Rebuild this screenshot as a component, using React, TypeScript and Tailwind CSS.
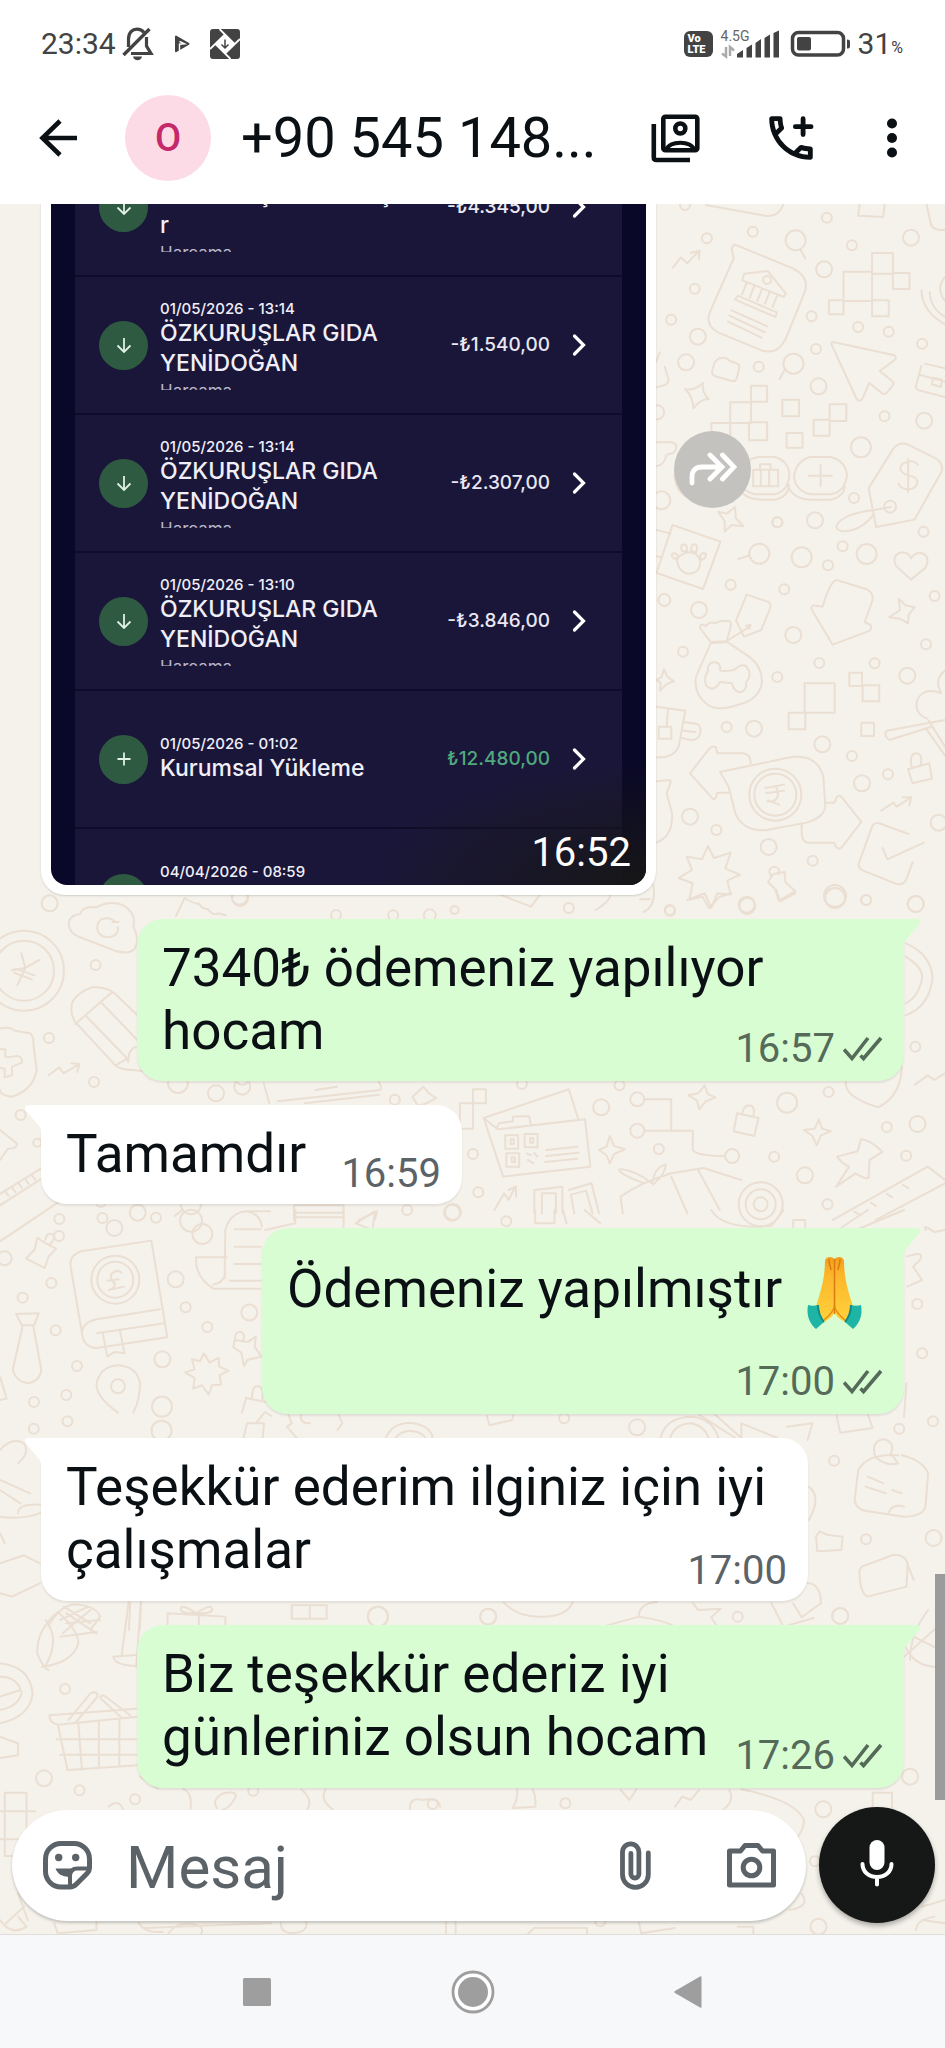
import { useState } from "react";

interface Transaction {
  date?: string;
  name: string[];
  amount: string;
  income?: boolean;
  note?: boolean;
}

interface Message {
  id: number;
  text: string;
  time: string;
  mine?: boolean;
  emoji?: boolean;
  size: string;
}

interface Doodle {
  x: number;
  y: number;
  sx: number;
  sy: number;
  paths: string[];
  dots: number[][];
}

const transactions: Transaction[] = [
  { date: "01/05/2026 - 13:15", name: ["ÖZKURUŞLAR GIDAŞ", "r"], amount: "-₺4.345,00", note: true },
  { date: "01/05/2026 - 13:14", name: ["ÖZKURUŞLAR GIDA", "YENİDOĞAN"], amount: "-₺1.540,00", note: true },
  { date: "01/05/2026 - 13:14", name: ["ÖZKURUŞLAR GIDA", "YENİDOĞAN"], amount: "-₺2.307,00", note: true },
  { date: "01/05/2026 - 13:10", name: ["ÖZKURUŞLAR GIDA", "YENİDOĞAN"], amount: "-₺3.846,00", note: true },
  { date: "01/05/2026 - 01:02", name: ["Kurumsal Yükleme"], amount: "₺12.480,00", income: true },
];

const messages: Message[] = [
  { id: 1, text: "7340₺ ödemeniz yapılıyor hocam", time: "16:57", mine: true, size: "w-[767px] pb-[18px]" },
  { id: 2, text: "Tamamdır", time: "16:59", size: "w-[421px] pb-[18px]" },
  { id: 3, text: "Ödemeniz yapılmıştır", time: "17:00", mine: true, emoji: true, size: "w-[642px] pb-[84px]" },
  { id: 4, text: "Teşekkür ederim ilginiz için iyi çalışmalar", time: "17:00", size: "w-[767px] pb-[19px]" },
  { id: 5, text: "Biz teşekkür ederiz iyi günleriniz olsun hocam", time: "17:26", mine: true, size: "w-[767px] pb-[19px]" },
];

// Wallpaper drawings, grouped by area. Dots are [x, y, radius].
const doodles: Doodle[] = [
  {
    x: 400, y: 195, sx: 0.3476, sy: 0.3333,
    paths: [
      "M880 30L1050 62Q1090 68 1102 30M1322 30L1318 62L1390 66L1394 30M1515 30L1528 90Q1535 108 1568 104",
      "M785 218L808 187L826 205L860 168M836 173L862 167L860 192",
      "M962 148L1130 220Q1180 246 1164 292L1110 430Q1086 482 1040 466L915 412Q876 390 892 350L960 190L954 160Z",
      "M990 236L1058 228L1110 296L1104 306L985 256ZM998 262L984 298M1020 270L1006 308M1042 280L1028 318M1064 290L1050 326M1086 300L1072 336M972 302L1084 352L1080 366L964 314Z",
      "M954 346L1056 394M948 362L1050 412M944 380L1040 428",
      "M1152 164L1166 190M1108 522L1092 552",
      "M1276 230H1358V318H1276ZM1358 174H1418V236H1358ZM1418 234H1466V282H1418ZM1234 316H1276V358H1234ZM1358 316H1406V364H1358ZM1358 236H1418",
      "M1500 286Q1502 350 1568 388M1524 292Q1526 340 1568 366M1568 246Q1540 280 1568 318",
      "M1242 440L1420 480Q1432 486 1422 496L1380 528L1418 560Q1422 566 1416 574L1400 594Q1392 600 1386 594L1350 564L1330 612Q1322 622 1314 612L1242 450Z",
      "M905 502L918 490Q940 484 948 498L966 504Q978 508 976 518L968 552Q964 560 954 558L908 544Q896 540 898 528Z",
      "M1510 506L1568 520M1500 512L1484 574Q1484 586 1500 588L1568 606M1496 540L1568 560M1534 548L1560 554L1556 576L1530 568Z",
      "M735 504L748 472M762 516L772 552Q774 564 762 570L735 578",
      "M820 582Q842 590 872 564Q866 590 888 612Q864 612 844 640Q844 606 820 582Z",
      "M950 622H1010V684H950ZM1010 572H1056V620H1010ZM1004 682H1056V736H1004ZM896 684H950V736H896Z",
      "M1100 614H1148V664H1100ZM1236 628H1284V678H1236ZM1190 674H1236V722H1190ZM1112 714H1158V758H1112Z",
      "M1030 786H1080Q1120 800 1120 842Q1116 890 1076 898H1020Q974 884 974 842Q980 798 1030 786ZM974 880Q990 912 1040 914H1080Q1116 906 1120 870M1180 786H1240Q1284 800 1286 842Q1280 890 1240 898H1180Q1134 884 1134 842Q1140 798 1180 786ZM1116 872Q1130 912 1180 914H1240Q1276 906 1280 876M840 786Q796 800 790 842Q794 904 850 914H910Q950 908 960 880",
      "M1016 824H1088V874H1016ZM1038 824V874M1062 824V874M1036 822V808H1066V822M1176 842H1242M1210 810V872",
      "M735 742H780Q800 746 794 762Q790 776 770 778M735 814Q760 812 766 782",
      "M1420 760L1348 880L1370 996L1480 974L1558 830Q1564 808 1544 792L1460 748Q1436 740 1420 760ZM1412 936L1360 946Q1290 954 1262 982Q1246 1002 1270 1008Q1320 1014 1362 960",
      "M1490 810Q1480 796 1462 800Q1436 806 1440 824Q1446 838 1466 842Q1492 848 1488 866Q1480 886 1456 882Q1440 880 1434 866M1462 792V892",
      "M915 950L940 956L964 936L966 970L988 994L954 990L934 1010L934 978ZM735 1004L778 1016M735 1084L750 1086",
      "M784 990L922 1040L872 1182L738 1134Z",
      "M1002 1082L974 1092",
      "M800 1108Q790 1090 812 1078Q832 1066 852 1078Q870 1096 860 1120Q850 1138 826 1136Q804 1130 800 1108ZM812 1068Q804 1052 816 1048Q828 1050 826 1068ZM838 1068Q836 1046 850 1048Q858 1056 852 1072ZM796 1092Q782 1092 782 1078Q790 1070 800 1082ZM864 1086Q866 1070 880 1076Q880 1092 866 1096Z",
      "M1470 1154L1426 1112Q1414 1078 1444 1072Q1464 1072 1470 1090Q1484 1068 1506 1076Q1526 1090 1512 1118Z",
    ],
    dots: [[820, 30, 5], [1228, 68, 5], [883, 130, 5], [1015, 110, 5], [1138, 136, 10], [1470, 128, 8], [1300, 151, 5], [1220, 223, 8], [848, 281, 5], [1056, 255, 4], [780, 374, 5], [857, 425, 8], [1184, 364, 5], [1318, 396, 5], [1406, 410, 5], [1502, 446, 5], [1197, 462, 5], [823, 502, 8], [1032, 515, 5], [1132, 506, 10], [1204, 574, 8], [1394, 664, 5], [1508, 677, 8], [740, 652, 7], [1326, 757, 10], [1306, 909, 5], [1410, 935, 6], [752, 916, 9], [1086, 982, 5], [1194, 976, 8], [1506, 1010, 5]],
  },
  {
    x: 640, y: 480, sx: 0.3333, sy: 0.3333,
    paths: [
      "M590 300Q570 304 548 380L520 376Q510 382 518 394L578 494L690 452Q698 440 690 434L674 426L698 360Q700 336 680 328Z",
      "M748 412L780 390L776 356L796 376L824 382L806 404L804 430L780 416Z",
      "M320 344L386 366Q394 372 390 386L364 450L312 470L288 422ZM265 480L330 440M318 438L332 434L328 446",
      "M212 486L180 444Q180 428 198 438Q208 422 226 430Q240 420 252 424Q276 416 272 440L260 484ZM212 490L168 590Q160 640 200 672Q230 696 290 676Q360 660 366 606Q366 560 330 532L262 486Z",
      "M240 570Q244 548 222 546Q200 550 204 574Q190 590 198 616Q220 640 240 606L276 610Q284 640 304 636Q322 628 318 608Q334 590 326 570Q314 546 292 562Q284 576 244 572Z",
      "M494 610H584V698H494ZM446 698H496V748H446ZM628 578H666V618H628ZM668 616H718V664H668ZM664 728H702V768H664Z",
      "M48 600L64 592L72 568L82 590L102 604L80 612L60 632L62 608ZM48 680L136 692L116 800Q100 836 48 832M56 740H94V776H56ZM84 686L80 740M132 726L172 732Q186 742 180 760Q176 782 150 780L126 774M130 752L166 756",
      "M915 720L740 752Q730 766 748 780L870 742M866 722L915 800M858 746L915 826M915 572Q880 600 904 640Q850 620 832 660Q820 700 862 716",
      "M232 820L228 802Q218 796 208 806L150 880L218 956Q228 962 232 938H266M236 820H310Q334 826 332 850",
      "M240 876L440 834Q530 816 550 890L556 980Q552 1012 500 1028L380 1050Q310 1056 286 1000L266 920ZM556 968H584Q590 940 604 950L664 1026L604 1104Q590 1112 582 1088H500Q480 1080 486 1030",
      "M376 924L432 914M378 940L432 932M382 964H400Q424 950 408 920M386 962L418 974",
      "M724 992L760 968L770 980L810 954M788 952L814 952L808 976M806 1062L718 1030Q700 1026 694 1046L656 1152Q654 1166 670 1172L770 1212Q790 1218 800 1196L818 1146M728 1104L742 1138L852 1088",
      "M804 868L868 850L876 896L818 910ZM816 864Q806 826 826 820Q850 820 842 854",
      "M204 1098L222 1134L272 1118L256 1166L300 1184L262 1202L272 1244L232 1240L214 1284L194 1240L148 1258L158 1210L116 1194L156 1170L140 1130L186 1138Z",
      "M400 1182L434 1176L436 1206L466 1234L416 1262L406 1228L384 1206ZM392 1186Q380 1164 404 1160Q422 1164 416 1182M48 904L90 900Q96 900 80 940L96 1000Q100 1070 48 1088M0 1258H30M40 1214Q50 1280 10 1296",
    ],
    dots: [[412, 127, 5], [358, 221, 10], [485, 232, 10], [680, 222, 10], [608, 199, 5], [564, 256, 5], [272, 314, 5], [433, 328, 5], [73, 360, 6], [177, 390, 8], [884, 348, 5], [460, 465, 8], [858, 493, 5], [129, 515, 5], [538, 549, 5], [704, 550, 5], [802, 587, 8], [412, 591, 5], [260, 741, 5], [342, 746, 8], [547, 793, 8], [636, 828, 5], [744, 883, 5], [666, 910, 8], [406, 944, 26], [406, 944, 21], [150, 1010, 8], [229, 1050, 5], [896, 1028, 8], [386, 1101, 8], [518, 1142, 5], [585, 1248, 11], [678, 1260, 5], [322, 1278, 8], [827, 1272, 8], [89, 1290, 5]],
  },
  {
    x: 0, y: 890, sx: 0.3333, sy: 0.3333,
    paths: [
      "M240 72Q250 46 290 52Q330 30 370 46Q410 70 400 110Q420 150 404 176Q390 194 350 184L246 144Q200 128 208 92Q214 76 240 72ZM346 96Q330 78 304 88Q284 104 296 130Q316 150 344 136Q356 126 354 112M338 96H356",
      "M528 78L554 24Q590 46 596 40Q610 60 622 56Q640 80 654 70L678 76",
      "M64 190L76 234L118 210M76 234L52 286M76 234L36 240M46 236L104 256M42 248L96 268",
      "M216 340Q226 310 276 292Q320 288 346 312L412 376M216 340Q210 370 224 394L346 526Q360 540 400 540L462 548M226 402L334 308M258 378L384 508M306 340L412 450M384 516L388 490Q404 460 418 480M346 526L386 504",
      "M0 416Q30 408 44 422L90 430Q102 440 100 460L110 540Q100 600 36 620Q0 616 0 600M0 478H16V500Q20 504 50 498Q68 500 66 518L36 530V556L14 562V536L0 534",
      "M146 556L178 532L190 550L236 524M214 520L238 522L232 546",
      "M0 720L50 760Q54 776 24 776L0 810M0 912L126 834M0 946L128 864M0 1054L224 904M16 904L26 918M36 892L46 906M56 880L66 894M76 868L86 882M96 856L106 870",
      "M112 1044L140 1062L168 1076L146 1100L134 1134L78 1106L104 1078ZM136 1050Q140 1024 160 1034Q166 1050 148 1064M544 962L524 978",
      "M244 1084L454 1052L502 1342L290 1374Q250 1372 246 1330L212 1130Q206 1096 244 1084ZM246 1330Q246 1298 290 1288L480 1258M290 1330L494 1300M308 1328L322 1400L344 1386L374 1390L360 1324",
      "M364 1148Q350 1136 334 1152Q328 1164 344 1180Q346 1196 326 1200L372 1190M322 1172L356 1168",
      "M680 1102H588Q584 1160 640 1196H780M674 1164L676 1020Q690 968 740 964H810M786 1010Q780 970 740 964M704 1018H782M704 1070H782M704 1122H782M690 1172H782M676 1150Q670 1180 640 1184",
      "M48 1272L116 1270L102 1306H66ZM68 1308L38 1440Q50 1476 84 1480Q120 1474 124 1440L100 1308",
      "M354 1568Q286 1520 290 1480Q300 1430 354 1426Q412 1430 420 1480Q420 1530 400 1568M0 1460L20 1526L0 1530",
      "M612 1390L628 1418L656 1404L658 1430L686 1442L658 1456L664 1484L636 1486L626 1514L606 1486L580 1496L584 1464L556 1448L584 1438L576 1408L600 1414Z",
      "M704 1350L744 1356L768 1340L764 1370L784 1400L742 1410L732 1428L724 1388L700 1372ZM706 1352Q702 1324 724 1326Q738 1336 728 1352M726 1568L738 1524L796 1536M756 1524Q756 1488 774 1488Q794 1494 786 1530",
    ],
    dots: [[149, 40, 8], [719, 20, 8], [287, 225, 5], [72, 242, 40], [72, 242, 30], [147, 444, 5], [282, 576, 5], [534, 579, 10], [648, 610, 8], [727, 560, 8], [62, 675, 5], [112, 758, 4], [302, 936, 5], [414, 918, 9], [178, 987, 5], [573, 943, 10], [468, 983, 5], [343, 1014, 8], [607, 1032, 10], [14, 1105, 7], [154, 1179, 5], [68, 1223, 5], [346, 1169, 24], [346, 1169, 18], [527, 1168, 8], [557, 1252, 5], [622, 1311, 5], [167, 1321, 5], [748, 1268, 8], [231, 1428, 5], [487, 1408, 8], [354, 1489, 7], [199, 1515, 5], [102, 1536, 5], [486, 1550, 10]],
  },
  {
    x: 100, y: 890, sx: 0.5389, sy: 0.3333,
    paths: [
      "M720 0L800 50L818 10M1090 30L1118 20L1130 54L1150 20L1172 10M1255 0L1262 34L1290 10M920 60Q960 20 940 0",
      "M304 580L314 640M330 634L520 600Q524 590 516 572M380 640L518 614M400 600L440 590",
      "M580 620L600 590L610 610L624 624L606 640L590 648Z",
      "M692 598H716V640H692ZM668 640H692V716H668Z",
      "M712 684L870 598L888 690M712 684L748 860L910 830L900 688L738 718ZM736 716L740 700L766 694V680L796 678L800 706",
      "M752 736H776V776H752ZM788 732H812V772H788ZM754 790H778V830H754ZM762 748H768V762H762ZM798 744H804V758H798ZM764 802H770V816H764ZM792 790L800 796M806 790L812 800M794 810L804 820M828 780L886 770M828 798L888 788M826 816L886 806",
      "M1010 628H1060V722M1010 722H1100V780Q1106 798 1160 798",
      "M1092 616L1110 610L1122 586L1128 612L1142 622L1124 634L1112 658L1108 632Z",
      "M1182 670L1222 684L1214 738L1176 724ZM1192 672Q1194 640 1210 648Q1216 660 1212 678",
      "M1306 720L1326 716L1334 688L1340 716L1356 724L1338 736L1330 766L1322 738ZM926 780L940 770L946 738L954 768L974 778L954 792L946 820L940 796Z",
      "M1412 748Q1410 760 1406 784L1368 800Q1376 820 1390 830L1366 890L1402 850Q1420 868 1426 864L1428 810L1452 786Q1430 750 1412 748Z",
      "M1384 575Q1380 620 1444 652Q1486 620 1488 530M1495 160Q1540 190 1545 260Q1540 350 1495 376M1495 200Q1525 230 1526 260Q1520 320 1495 340M1512 584L1536 556L1548 570L1568 550",
      "M806 970V900L858 890V970M820 970V910H846V970M870 900L912 880L926 970M880 970L874 914L902 902L914 970M732 960L750 910L758 930L770 892M758 900L772 890V920",
      "M970 970L966 920Q1000 880 1060 850L1120 834L1190 870M1060 860L1090 970M1110 840L1150 960M1010 880Q960 850 964 838Q990 838 1024 880Q1030 830 1050 824Q1050 850 1026 884",
      "M1360 990L1536 830L1568 870M1440 990L1568 880M1400 965L1410 975M1430 938L1440 948M1460 912L1470 922M1490 885L1500 895",
      "M360 990V946H452V990M360 968H452M480 990L514 964L510 990",
    ],
    dots: [[260, 24, 8], [438, 75, 5], [544, 76, 5], [612, 76, 6], [658, 60, 4], [870, 54, 5], [1058, 62, 5], [1200, 44, 8], [1364, 24, 10], [1422, 30, 5], [1514, 42, 8], [264, 590, 8], [547, 629, 5], [783, 582, 5], [964, 586, 5], [930, 652, 8], [997, 628, 7], [997, 722, 7], [1173, 798, 7], [1275, 638, 10], [1352, 606, 5], [692, 792, 5], [702, 907, 5], [1037, 777, 5], [1251, 800, 5], [1460, 711, 5], [1517, 702, 8], [1496, 797, 5], [1308, 856, 8], [1350, 943, 5], [1226, 943, 22], [1226, 943, 15], [1226, 943, 7], [1513, 470, 5], [70, 968, 8], [570, 960, 5], [655, 966, 8]],
  },
  {
    x: 0, y: 1210, sx: 0.6027, sy: 0.3333,
    paths: [
      "M424 640L440 606L450 618M404 684L410 640H438L436 684M478 610L484 640L476 650L492 684M500 612Q496 640 514 640M562 614L568 640L560 660M640 684Q650 640 680 638Q714 644 718 684M656 684Q664 664 680 662Q700 664 706 684M808 618L812 646L850 630L852 614",
      "M1096 684Q1104 620 1150 620Q1184 630 1192 684M1112 684Q1120 640 1148 640Q1170 650 1176 684M1160 614L1220 684M1184 610L1230 684L1230 640L1290 684M1306 650L1348 640L1340 690M1388 616L1394 668L1448 654L1440 614",
      "M1505 140Q1536 120 1526 150L1515 170L1530 210L1505 230M1504 520L1500 620M1536 60Q1530 40 1550 66L1568 60",
      "M1424 780Q1440 730 1490 736M1424 780L1418 870Q1420 900 1440 904L1500 920Q1536 920 1536 880L1540 790Q1530 750 1496 736M1440 800L1466 820M1436 830L1470 850M1480 840L1496 850M1474 910Q1480 880 1500 890M1450 720Q1450 690 1468 688Q1486 700 1478 730L1490 760Q1470 770 1452 740Z",
      "M1342 830Q1364 860 1342 930M1354 980L1360 964L1372 974L1398 980L1396 1020L1356 1024ZM1430 1070L1480 1036Q1500 1030 1506 1060L1504 1130L1440 1160Q1426 1150 1426 1080ZM1505 1060L1516 1110",
      "M1330 1120Q1362 1110 1362 1180L1330 1222L1316 1180M1280 1180L1300 1250L1350 1224",
      "M0 720Q20 680 40 700Q50 730 30 760M0 810L50 850M0 840L34 880M0 920Q40 930 68 908M30 910Q30 880 66 884M0 970L8 1000M0 1060L40 1036L66 1060M0 1150L20 1160L66 1120",
      "M216 1180L214 1260M234 1176L232 1260M80 1250Q100 1180 130 1184Q160 1190 166 1220L150 1260M106 1190L150 1240M146 1190L100 1230",
      "M278 1210L374 1220V1250M278 1210V1250M330 1212V1250M324 1208Q300 1180 300 1196T326 1210Q350 1180 352 1196T326 1210M484 1186H542V1226H484ZM514 1186V1226",
      "M836 1178Q860 1224 900 1220Q940 1220 950 1178M1000 1250L1060 1220Q1100 1230 1120 1250M1060 1220Q1060 1180 1090 1176M1150 1180L1158 1200L1196 1196L1180 1222L1190 1250",
      "M440 60L490 40V0M570 0V55M490 22H570M590 40L622 4L618 60ZM888 0V40H920V0M934 0L940 40M970 0L996 40M1180 0Q1200 60 1280 48L1300 0M1390 60L1440 0M1420 60L1500 0M1316 56V30H1336V56",
    ],
    dots: [[840, 34, 5], [750, 8, 8], [317, 32, 11], [170, 24, 5], [1057, 652, 8], [936, 625, 5], [1384, 752, 5], [1492, 656, 5], [1548, 634, 5], [1437, 988, 5], [1549, 984, 8], [1224, 1220, 5], [1394, 1218, 8], [1530, 430, 5], [1522, 282, 5], [627, 1220, 10], [810, 1220, 8], [56, 656, 5], [112, 634, 5], [268, 662, 10], [98, 78, 5]],
  },
  {
    x: 0, y: 1600, sx: 0.6027, sy: 0.3333,
    paths: [
      "M96 36Q60 90 62 160Q70 200 80 210M96 36Q130 90 130 130Q120 190 70 200M76 60Q100 120 76 196M110 70L166 60M100 110L160 96M110 40L160 100M150 30L104 100M214 0L202 164M234 0L226 200M188 170L230 164M188 170Q190 196 226 198",
      "M0 190Q50 200 54 280Q50 350 0 370M0 230Q30 230 36 280Q30 320 0 330M0 290L34 270",
      "M82 346L226 326M82 346Q82 370 96 374L228 350M96 374L112 510L228 496M94 418H228M100 464H228M130 370L136 510M164 364V506M198 358V500M114 360L150 280Q162 270 162 290L126 366M216 346L172 286Q162 290 170 300L200 350",
      "M0 410L14 420L30 430V466L0 474",
      "M8 578H44V768H8ZM0 634H58M0 718H36",
      "M180 620Q200 590 206 640M232 530L262 566M316 626Q320 580 304 566M360 624Q350 600 370 580Q400 570 388 600Q380 626 368 630M500 568Q520 600 510 628M540 568Q530 600 552 628M680 628Q680 590 700 600Q728 590 730 620",
      "M858 568Q860 600 850 624L888 620Q890 590 884 568M1030 570L1044 600L1056 568M1120 620L1132 590L1146 600L1160 570M1210 570Q1220 600 1200 630M1230 568Q1320 600 1334 660Q1334 690 1320 720M1450 578H1480V650M1448 578V620",
      "M10 970L40 920M0 960Q20 1010 44 980L30 950M30 880L46 960M90 970L96 1000L160 990V966M230 968Q240 1000 270 996M280 1000Q290 966 320 972Q340 980 334 1000M240 984L450 970M466 970Q466 1000 486 1000Q512 996 508 966M740 966V1000M756 966V1000M876 1002L886 984H974V1002M1060 968L1064 1000L1120 984M1224 980H1250V1002M1330 880Q1346 920 1310 930",
      "M1530 920L1568 900M1520 990Q1520 960 1550 950M1530 960L1568 970M1500 130Q1516 210 1568 200M1540 30Q1510 100 1510 180M1500 170L1568 60M1505 100L1560 150",
    ],
    dots: [[627, 50, 10], [810, 50, 8], [1394, 48, 8], [108, 267, 5], [73, 535, 8], [132, 571, 5], [224, 598, 5], [420, 572, 5], [938, 610, 5], [1366, 628, 8], [1510, 530, 8], [1352, 784, 5], [1358, 980, 8], [996, 964, 5], [718, 612, 5]],
  },
];

function Wallpaper() {
  return (
    <svg
      aria-hidden="true"
      className="absolute inset-0 h-full w-full"
      viewBox="0 204 945 1731"
      preserveAspectRatio="xMidYMid slice"
      fill="none"
      stroke="#eadfd2"
      strokeWidth="2"
      strokeLinejoin="round"
      strokeLinecap="round"
    >
      {doodles.map((d, i) => (
        <g key={i}>
          <g transform={`translate(${d.x} ${d.y}) scale(${d.sx} ${d.sy})`}>
            {d.paths.map((p, j) => (
              <path key={j} d={p} vectorEffect="non-scaling-stroke" />
            ))}
          </g>
          {d.dots.map(([x, y, r], j) => (
            <circle key={j} cx={d.x + x * d.sx} cy={d.y + y * d.sy} r={r} />
          ))}
        </g>
      ))}
    </svg>
  );
}

function StatusBar() {
  return (
    <div className="flex h-[88px] items-center justify-between pl-[41px] pr-[42px] text-[30px] leading-9 text-[#434343]">
      <div className="flex items-center">
        <span>23:34</span>
        <svg width="32" height="34" viewBox="0 0 32 34" className="ml-[6px]" fill="none" stroke="currentColor" strokeWidth="3.2">
          <path d="M6.5 20V12C6.500 5.500 10.500 2.200 15 2.200C18 2.200 20.500 3.500 22 5.500M24.500 10V19L29 26.500H9" />
          <path d="M1.500 28L27.500 2" strokeWidth="3.400" />
          <path d="M11 29.500H20C19.500 32 17.500 33.200 15.500 33.200S11.500 32 11 29.500Z" fill="currentColor" stroke="none" />
        </svg>
        <svg width="16" height="18" viewBox="0 0 16 18" className="ml-[20px]">
          <path d="M2 1.500L14.500 8.800L2 16.200Z" fill="#434343" stroke="#434343" strokeWidth="2" strokeLinejoin="round" />
          <path d="M5.500 6.500L10.500 8.700L5.500 9.200V17" fill="none" stroke="#fff" strokeWidth="1.400" />
        </svg>
        <svg width="30" height="30" viewBox="0 0 30 30" className="ml-[20px]">
          <rect width="30" height="30" rx="3" fill="#434343" />
          <path d="M15 5L25 15L15 25L5 15Z" fill="#fff" />
          <path d="M9.500 0L25 15.500M30 10L14.500 25M20.500 30L5 14.500M0 20L15.500 5" stroke="#fff" strokeWidth="1.800" />
          <path d="M15 10.500V19M11.500 15.500L15 19L18.500 15.500" fill="none" stroke="#434343" strokeWidth="1.500" />
        </svg>
      </div>
      <div className="flex items-center">
        <div className="flex h-[26px] w-[29px] flex-col justify-center rounded-md bg-[#434343] pl-1 text-[11px] leading-[11px] font-black text-white">
          <span>Vo</span>
          <span>LTE</span>
        </div>
        <div className="relative ml-2 h-[30px] w-[60px]">
          <span className="absolute -top-px left-0 text-[14px] leading-4 text-[#666]">4.5G</span>
          <svg width="60" height="30" viewBox="0 0 60 30">
            <path d="M5 18V27.500L1 24.500M9 27V18L13 21.500" fill="none" stroke="#aaa" strokeWidth="2.500" />
            <path d="M16 28.500V25L22 21V28.500ZM25.500 28.500V19L31 15.500V28.500ZM34.500 28.500V14L40 10V28.500ZM43.500 28.500V9L49 5.500V28.500ZM52.500 28.500V4L58 1.500V28.500Z" fill="#434343" />
          </svg>
        </div>
        <svg width="62" height="28" viewBox="0 0 62 28" className="ml-2">
          <rect x="3.500" y="2.500" width="51" height="22.500" rx="6" fill="none" stroke="#434343" strokeWidth="3.500" />
          <rect x="8" y="7" width="14" height="13.500" rx="2" fill="#434343" />
          <path d="M58 9.500q3 0 3 2v5q0 2-3 2z" fill="#434343" />
        </svg>
        <span className="ml-[7px]">31</span>
        <span className="pt-2 text-[16px] leading-5">%</span>
      </div>
    </div>
  );
}

function Header() {
  return (
    <header className="relative z-10 shrink-0 bg-white">
      <StatusBar />
      <div className="flex h-[116px] items-center pr-[43px] pb-4 pl-[39px] text-[#0a1014]">
        <button type="button" aria-label="Geri">
          <svg width="38" height="38" viewBox="0 0 38 38" fill="none" stroke="currentColor" strokeWidth="4.600">
            <path d="M38 19H4M21 2L3.500 19L21 36" />
          </svg>
        </button>
        <div className="ml-12 flex size-[86px] shrink-0 items-center justify-center rounded-full bg-[#fddbe6] text-[38px] font-medium text-[#c6296b]">
          O
        </div>
        <h1 className="ml-[30px] min-w-0 flex-1 truncate text-[56px] leading-[66px]">+90 545 148...</h1>
        <div className="flex items-center gap-[62px]">
          <button type="button" aria-label="Kişi kartı">
            <svg width="49" height="49" viewBox="0 0 49 49" fill="none" stroke="currentColor" strokeWidth="4.600">
              <rect x="12.300" y="2.800" width="34" height="33.500" rx="2" />
              <circle cx="29.300" cy="14.500" r="5" />
              <path d="M14.500 36C17 31.500 23 28.800 29.300 28.800S41.500 31.500 44 36" strokeWidth="4" />
              <path d="M2.800 10V43.500Q2.800 46 5.500 46H39" />
            </svg>
          </button>
          <button type="button" aria-label="Ara">
            <svg width="58" height="58" viewBox="0 0 24 24" fill="currentColor">
              <path d="M6.540 5c.06.89.21 1.760.45 2.590l-1.200 1.200c-.41-1.200-.67-2.470-.76-3.790h1.510m9.860 12.020c.85.24 1.720.39 2.600.45v1.490c-1.320-.09-2.590-.35-3.800-.75l1.200-1.190M7.500 3H4c-.55 0-1 .45-1 1 0 9.390 7.610 17 17 17 .55 0 1-.45 1-1v-3.490c0-.55-.45-1-1-1-1.240 0-2.450-.2-3.570-.57-.1-.04-.21-.05-.31-.05-.26 0-.51.1-.71.29l-2.200 2.200c-2.830-1.450-5.150-3.760-6.590-6.590l2.200-2.200c.28-.28.36-.67.25-1.020C8.700 6.450 8.500 5.250 8.500 4c0-.55-.45-1-1-1z" />
              <path d="M17 4v6.600M13.800 7.300h6.500" fill="none" stroke="currentColor" strokeWidth="2" strokeLinecap="round" />
            </svg>
          </button>
          <button type="button" aria-label="Menü">
            <svg width="20" height="40" viewBox="0 0 20 40" fill="currentColor">
              <circle cx="10" cy="5.500" r="5" />
              <circle cx="10" cy="20" r="5" />
              <circle cx="10" cy="34.500" r="5" />
            </svg>
          </button>
        </div>
      </div>
    </header>
  );
}

function TransactionRow({ item }: { item: Transaction }) {
  return (
    <li className="flex h-[138px] items-center border-b-2 border-[#0f0c2b] pr-9 pl-6">
      <span className="flex size-[49px] shrink-0 items-center justify-center rounded-full bg-[#2f5a42]">
        <svg width="16" height="16" viewBox="0 0 16 16" fill="none" stroke="#dff0e4" strokeWidth="1.800">
          <path d={item.income ? "M8 1.500V14.500M1.500 8H14.500" : "M8 1V14.500M1.500 8.500L8 15L14.500 8.500"} />
        </svg>
      </span>
      <div className="ml-3 flex-1 text-[#f0eff8]">
        <p className="text-[15px] leading-[18px] font-medium">{item.date}</p>
        {item.name.map((line) => (
          <p key={line} className="text-[23px] leading-[30px] font-medium">{line}</p>
        ))}
        {item.note && <p className="mt-1 h-2 overflow-hidden text-[17px] leading-[18px] text-[#b9b8cc]">Harcama</p>}
      </div>
      <span className={item.income ? "text-[19px] font-medium text-[#4fa97c]" : "text-[19px] font-medium text-[#e8e7f2]"}>
        {item.amount}
      </span>
      <svg width="14" height="24" viewBox="0 0 14 24" className="ml-[22px]" fill="none" stroke="#fff" strokeWidth="3.200" strokeLinecap="round">
        <path d="M2.500 3L11.500 12L2.500 21" />
      </svg>
    </li>
  );
}

function ImageMessage() {
  return (
    <div className="flex items-center gap-[18px]">
      <div className="w-[615px] rounded-3xl bg-white p-[10px] shadow-[0_1px_2px_rgba(0,0,0,0.15)]">
        <div className="relative overflow-hidden rounded-b-2xl bg-[#0a0828] px-6 font-[Inter,sans-serif]">
          <ul className="bg-[#1a163a]">
            {transactions.map((item, i) => (
              <TransactionRow key={i} item={item} />
            ))}
            <li className="flex h-14 pl-6">
              <span className="mt-[45px] size-[49px] rounded-full bg-[#2f5a42]" />
              <p className="mt-[34px] ml-3 text-[15px] leading-[18px] font-medium text-[#f0eff8]">04/04/2026 - 08:59</p>
            </li>
          </ul>
          <div className="absolute right-0 bottom-0 flex h-32 w-72 items-end justify-end bg-radial-[at_100%_100%] from-[#171717] to-transparent to-70% pr-[15px] pb-[9px] font-[Roboto,sans-serif] text-[40px] leading-[46px] text-white">
            16:52
          </div>
        </div>
      </div>
      <button type="button" aria-label="İlet" className="mb-[86px] flex size-[77px] items-center justify-center rounded-full bg-[#c4c2bf]">
        <svg width="48" height="34" viewBox="0 0 48 34" fill="none" stroke="#fff" strokeWidth="4.800" strokeLinecap="round">
          <path d="M3 31V25C3 18.500 7 15 12.500 15H32M21 3L33 15L21 27M33.500 3L45 15L33.500 27" />
        </svg>
      </button>
    </div>
  );
}

function PrayingHands() {
  return (
    <svg width="58" height="74" viewBox="0 0 58 74" role="img" aria-label="🙏" className="ml-6 inline-block">
      <defs>
        <linearGradient id="hand" x1="0" y1="0" x2="0" y2="1">
          <stop offset="0" stopColor="#f59e1c" />
          <stop offset="0.3" stopColor="#fcb72b" />
          <stop offset="1" stopColor="#ffd23c" />
        </linearGradient>
      </defs>
      <path d="M28.500 3C26 0 19.500 0 19 5C18.800 18 17 28 12 44L9 53L18 66C24 63 27 60 28.500 56Z" fill="url(#hand)" />
      <path d="M28.500 3C31 0 37.500 0 38 5C38.200 18 40 28 45 44L48 53L39 66C33 63 30 60 28.500 56Z" fill="url(#hand)" />
      <path d="M28.500 3V58M23 3C22.500 6 24 8 25 14M34 3C34.500 6 33 8 32 14" fill="none" stroke="#d97a12" strokeWidth="1.500" />
      <path d="M28.500 50C27.500 56 23 60 18 64M28.500 50C29.500 56 34 60 39 64" fill="none" stroke="#e58a14" strokeWidth="1.500" />
      <path d="M2 49C5 50 9 50 12 49C12 56 14 61 18 66L10 73C4 68 0 60 2 49Z" fill="#1fb5a6" />
      <path d="M55 49C52 50 48 50 45 49C45 56 43 61 39 66L47 73C53 68 57 60 55 49Z" fill="#1fb5a6" />
      <path d="M12 49C12 56 14 61 18 66M45 49C45 56 43 61 39 66" fill="none" stroke="#0d8d86" strokeWidth="2" />
    </svg>
  );
}

function Bubble({ message }: { message: Message }) {
  const { mine } = message;
  const base = "relative max-w-full rounded-[26px] pt-[18px] pr-[21px] pl-[25px] shadow-[0_2px_2px_rgba(0,0,0,0.08)]";
  const side = mine ? "self-end rounded-tr-none bg-[#d8fdd2]" : "self-start rounded-tl-none bg-white";

  return (
    <div className={`${base} ${side} ${message.size}`}>
      {mine ? (
        <svg width="18" height="27" viewBox="0 0 18 27" className="absolute top-0 -right-[17px]" fill="#d8fdd2">
          <path d="M0 0H14Q18.500 1 16.500 5L3 21Q1 23.500 1 27H0Z" />
        </svg>
      ) : (
        <svg width="18" height="27" viewBox="0 0 18 27" className="absolute top-0 -left-[17px]" fill="#fff">
          <path d="M18 0H4Q-.5 1 1.500 5L15 21Q17 23.500 17 27H18Z" />
        </svg>
      )}
      <p className={message.emoji ? "pt-1 text-[53px] leading-[79px]" : "text-[53px] leading-[63px]"}>
        {message.text}
        {message.emoji && <PrayingHands />}
      </p>
      <span
        className={
          mine
            ? "absolute right-[21px] bottom-[9px] flex items-center gap-2 text-[40px] leading-[46px] text-[#566a59]"
            : "absolute right-[21px] bottom-[7px] text-[40px] leading-[46px] text-[#5b6368]"
        }
      >
        {message.time}
        {mine && (
          <svg width="40" height="26" viewBox="0 0 40 26" fill="none" stroke="currentColor" strokeWidth="3.600">
            <path d="M1 13.500L9 22.500L25 2M17.500 19.500L20.500 22.500L38 2" />
          </svg>
        )}
      </span>
    </div>
  );
}

function Composer() {
  const [value, setValue] = useState("");

  return (
    <form className="relative flex items-center gap-[13px] pt-[19px] pr-[10px] pb-3 pl-3" onSubmit={(e) => e.preventDefault()}>
      <div className="flex h-[111px] min-w-0 flex-1 items-center rounded-full bg-white pr-[30px] pl-[31px] text-[#5b6368] shadow-[0_2px_3px_rgba(0,0,0,0.2)]">
        <button type="button" aria-label="Çıkartma">
          <svg width="49" height="49" viewBox="0 0 49 49" fill="none" stroke="currentColor" strokeWidth="5" strokeLinejoin="round">
            <path d="M27 46H18A15.500 15.500 0 0 1 2.500 30.500V18A15.500 15.500 0 0 1 18 2.500H31A15.500 15.500 0 0 1 46.500 18V27Q46.500 30 44 32.500L33.500 43Q30.500 46 27 46Z" />
            <path d="M27 46V35Q27 27.500 34.500 27.500H46" strokeWidth="4" />
            <circle cx="15.700" cy="16.500" r="3.700" fill="currentColor" stroke="none" />
            <circle cx="32.700" cy="16.500" r="3.700" fill="currentColor" stroke="none" />
            <path d="M12.500 27.500H33L27 35.500C20 36.500 14.500 33 12.500 27.500Z" fill="currentColor" stroke="none" />
          </svg>
        </button>
        <input
          type="text"
          aria-label="Mesaj"
          placeholder="Mesaj"
          value={value}
          onChange={(e) => setValue(e.target.value)}
          className="ml-[34px] h-[84px] min-w-0 flex-1 bg-transparent pt-1 text-[60px] leading-[80px] outline-none placeholder:text-[#5b6368]"
        />
        <button type="button" aria-label="Dosya ekle">
          <svg width="31" height="49" viewBox="0 0 31 49" fill="none" stroke="currentColor" strokeWidth="4.800" strokeLinecap="round">
            <path d="M28.300 12V33.500A12.900 12.900 0 0 1 2.500 33.500V11A8.200 8.200 0 0 1 18.900 11V33A4 4 0 0 1 10.900 33V12.500" />
          </svg>
        </button>
        <button type="button" aria-label="Kamera" className="ml-[76px]">
          <svg width="49" height="45" viewBox="0 0 49 45" fill="none" stroke="currentColor" strokeWidth="5" strokeLinejoin="round">
            <path d="M2.500 8H13.500L18 2.500H31L35.500 8H46.500V42H2.500Z" />
            <circle cx="24.500" cy="24.500" r="8.300" />
          </svg>
        </button>
      </div>
      <button type="button" aria-label="Ses kaydı" className="flex size-[116px] shrink-0 items-center justify-center rounded-full bg-[#161717] shadow-[0_3px_5px_rgba(0,0,0,0.3)]">
        <svg width="34" height="47" viewBox="0 0 34 47" className="mb-1" fill="none" stroke="#fff" strokeWidth="4" strokeLinecap="round">
          <rect x="9.500" y="0" width="15" height="30" rx="7.500" fill="#fff" stroke="none" />
          <path d="M2.500 24C2.500 32 9 37 17 37S31.500 32 31.500 24M17 37V44.500" />
        </svg>
      </button>
    </form>
  );
}

function NavBar() {
  return (
    <nav className="relative z-10 flex h-[113px] shrink-0 items-center justify-center gap-[179px] bg-[#f6f8fa] text-[#9e9e9e] shadow-[0_-1px_0_#e0ddd8]">
      <button type="button" aria-label="Son uygulamalar">
        <svg width="30" height="30" viewBox="0 0 30 30" fill="currentColor">
          <rect x="1" y="1" width="28" height="28" rx="1.500" />
        </svg>
      </button>
      <button type="button" aria-label="Ana ekran">
        <svg width="44" height="44" viewBox="0 0 44 44">
          <circle cx="22" cy="22" r="20" fill="#fff" stroke="currentColor" strokeWidth="2.800" />
          <circle cx="22" cy="22" r="15" fill="currentColor" />
        </svg>
      </button>
      <button type="button" aria-label="Geri dön">
        <svg width="30" height="34" viewBox="0 0 30 34" fill="currentColor">
          <path d="M26 1.500Q27.500.5 27.500 2.500V31.500Q27.500 33.500 26 32.500L1 18Q-.5 17 1 16Z" />
        </svg>
      </button>
    </nav>
  );
}

export default function App() {
  return (
    <div className="flex h-screen flex-col overflow-hidden bg-white font-[Roboto,sans-serif] text-[#0a1014]">
      <Header />
      <main className="relative flex min-h-0 flex-1 flex-col justify-end bg-[#f5f2eb]">
        <Wallpaper />
        <div className="relative flex flex-col gap-6 px-[41px]">
          <ImageMessage />
          {messages.map((message) => (
            <Bubble key={message.id} message={message} />
          ))}
        </div>
        <Composer />
        <div className="absolute right-0 bottom-[135px] h-[226px] w-[10px] bg-[#9b9b9b]" />
      </main>
      <NavBar />
    </div>
  );
}
